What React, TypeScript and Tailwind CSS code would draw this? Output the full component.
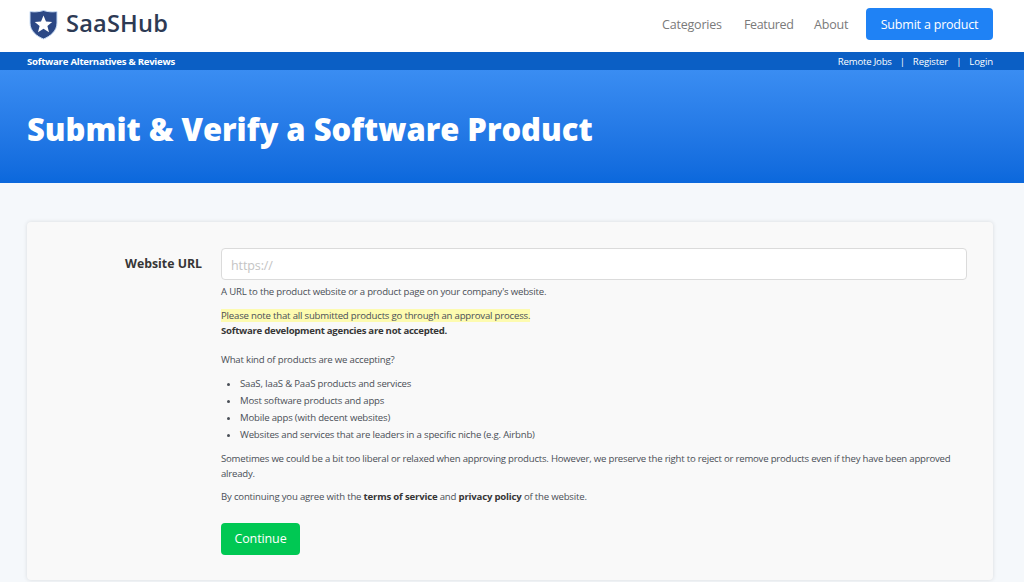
export default function App() {
  return (
    <div className="h-[582px] overflow-hidden bg-[#f5f8fb] text-[#363636] font-['Open_Sans',sans-serif]">
      <header className="h-[52px] bg-white flex items-center pb-[4px] pl-[29px] pr-[31px]">
        <a className="flex items-center gap-[8px]">
          <svg width="29" height="31" viewBox="0 0 29 31">
            <path d="M14.500 1.500 C19 3 24 3.200 28 2.500 L28 14 C28 22 21 27.500 14.500 30 C8 27.500 1 22 1 14 L1 2.500 C5 3.200 10 3 14.500 1.500 Z" fill="#2c4885" stroke="#c9dcf5" strokeWidth="1" />
            <path d="M14.500 6.500 L17 12.600 L23.200 13 L18.400 17 L20 23.200 L14.500 19.800 L9 23.200 L10.600 17 L5.800 13 L12 12.600 Z" fill="#ffffff" />
          </svg>
          <span className="text-[23.6px] leading-none font-semibold text-[#2d3a54] tracking-[0.2px]">SaaSHub</span>
        </a>
        <nav className="ml-auto flex items-center text-[12.5px] tracking-[-0.2px] text-[#7a7a7a]">
          <a className="w-[82px] pt-[2px]">Categories</a>
          <a className="w-[70px] pt-[2px] tracking-[-0.35px]">Featured</a>
          <a className="w-[52px] pt-[2px]">About</a>
          <button className="h-[32px] w-[127px] rounded-[4px] bg-[#1f82f5] text-white pt-[2px]">Submit a product</button>
        </nav>
      </header>
      <div className="h-[18px] bg-[#0b5fc5] text-white text-[9.6px] tracking-[-0.12px] flex items-center justify-between pt-[2px] pl-[27px] pr-[31px]">
        <span className="font-bold tracking-[-0.25px]">Software Alternatives &amp; Reviews</span>
        <span className="flex items-center gap-[8px]">
          <a className="tracking-[-0.2px]">Remote Jobs</a><span>|</span><a>Register</a><span>|</span><a>Login</a>
        </span>
      </div>
      <section className="h-[113px] bg-gradient-to-b from-[#3a8df2] to-[#0b68dc] flex items-center pt-[6px] pl-[27px] pr-[31px]">
        <h1 className="text-[30.95px] font-extrabold text-white leading-none">Submit &amp; Verify a Software Product</h1>
      </section>
      <main className="pl-[27px] pr-[31px] pt-[39px]">
        <div className="h-[358px] rounded-[4px] bg-[#f9f9f9] shadow-[0_0_4px_rgba(10,10,10,0.12)] pt-[26px] pr-[26px] flex text-[9.6px] tracking-[-0.19px] leading-[15px] text-[#4a4f57]">
          <label className="w-[175px] text-right text-[12.3px] tracking-normal font-bold text-[#363636] pt-[8px] shrink-0">Website URL</label>
          <div className="ml-[19px] flex-1">
            <input placeholder="https://" className="block w-full h-[32px] rounded-[4px] border border-[#dbdbdb] bg-white px-[9px] pt-[2px] text-[12.5px] tracking-[-0.1px] placeholder:text-[#c4c4c4]" />
            <p className="mt-[4px]">A URL to the product website or a product page on your company's website.</p>
            <p className="mt-[9px]"><span className="bg-[#fdfbb0]">Please note that all submitted products go through an approval process.</span></p>
            <p className="font-bold text-[#363636] tracking-[-0.27px]">Software development agencies are not accepted.</p>
            <p className="mt-[14px]">What kind of products are we accepting?</p>
            <ul className="list-disc pl-[19px] mt-[9px] [&>li]:mb-[2px]">
              <li>SaaS, IaaS &amp; PaaS products and services</li>
              <li>Most software products and apps</li>
              <li>Mobile apps (with decent websites)</li>
              <li>Websites and services that are leaders in a specific niche (e.g. Airbnb)</li>
            </ul>
            <p className="mt-[9px] tracking-[-0.21px]">Sometimes we could be a bit too liberal or relaxed when approving products. However, we preserve the right to reject or remove products even if they have been approved already.</p>
            <p className="mt-[8px]">By continuing you agree with the <b className="text-[#363636]">terms of service</b> and <b className="text-[#363636]">privacy policy</b> of the website.</p>
            <button className="mt-[19px] block h-[32px] w-[79px] rounded-[4px] bg-[#00c853] text-white text-[12.5px] tracking-[-0.1px] pb-[2px]">Continue</button>
          </div>
        </div>
      </main>
    </div>
  );
}
